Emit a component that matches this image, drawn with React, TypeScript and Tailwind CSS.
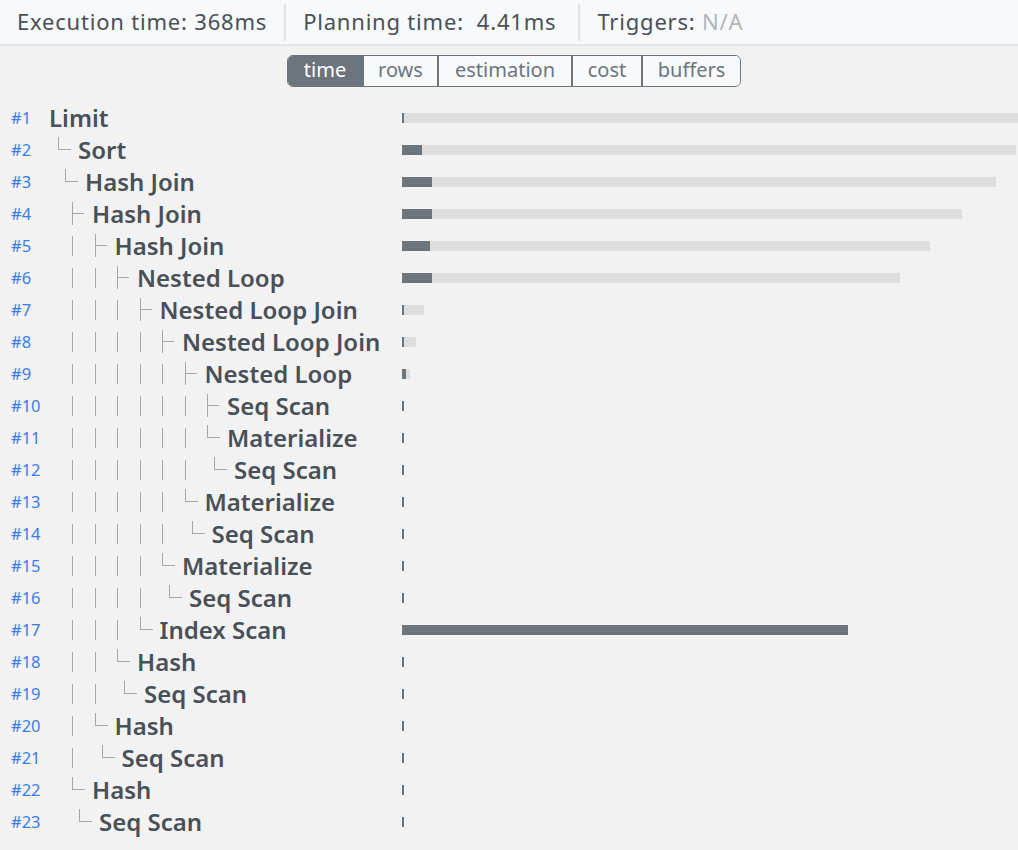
import React from "react";

type Row = { id: number; name: string; prefix: string; dark: number; total: number };

// prefix tokens: "s" = blank gap, "|" = vertical guide, "t" = ├ , "l" = └
const rows: Row[] = [
  { id: 1, name: "Limit", prefix: "", dark: 2, total: 640 },
  { id: 2, name: "Sort", prefix: "l", dark: 20, total: 614 },
  { id: 3, name: "Hash Join", prefix: "sl", dark: 30, total: 594 },
  { id: 4, name: "Hash Join", prefix: "sst", dark: 30, total: 560 },
  { id: 5, name: "Hash Join", prefix: "ss|t", dark: 28, total: 528 },
  { id: 6, name: "Nested Loop", prefix: "ss||t", dark: 30, total: 498 },
  { id: 7, name: "Nested Loop Join", prefix: "ss|||t", dark: 2, total: 22 },
  { id: 8, name: "Nested Loop Join", prefix: "ss||||t", dark: 2, total: 14 },
  { id: 9, name: "Nested Loop", prefix: "ss|||||t", dark: 4, total: 8 },
  { id: 10, name: "Seq Scan", prefix: "ss||||||t", dark: 2, total: 2 },
  { id: 11, name: "Materialize", prefix: "ss||||||l", dark: 2, total: 2 },
  { id: 12, name: "Seq Scan", prefix: "ss||||||sl", dark: 2, total: 2 },
  { id: 13, name: "Materialize", prefix: "ss|||||l", dark: 2, total: 2 },
  { id: 14, name: "Seq Scan", prefix: "ss|||||sl", dark: 2, total: 2 },
  { id: 15, name: "Materialize", prefix: "ss||||l", dark: 2, total: 2 },
  { id: 16, name: "Seq Scan", prefix: "ss||||sl", dark: 2, total: 2 },
  { id: 17, name: "Index Scan", prefix: "ss|||l", dark: 446, total: 446 },
  { id: 18, name: "Hash", prefix: "ss||l", dark: 2, total: 2 },
  { id: 19, name: "Seq Scan", prefix: "ss||sl", dark: 2, total: 2 },
  { id: 20, name: "Hash", prefix: "ss|l", dark: 2, total: 2 },
  { id: 21, name: "Seq Scan", prefix: "ss|sl", dark: 2, total: 2 },
  { id: 22, name: "Hash", prefix: "ssl", dark: 2, total: 2 },
  { id: 23, name: "Seq Scan", prefix: "sssl", dark: 2, total: 2 },
];

const Token: React.FC<{ t: string }> = ({ t }) => {
  if (t === "s") return <span className="w-[7px] shrink-0" />;
  if (t === "|")
    return (
      <span className="w-[22.5px] shrink-0 h-full flex items-center">
        <span className="block w-px h-[20px] bg-[#a3a8ad]" />
      </span>
    );
  if (t === "t")
    return (
      <span className="relative w-[20px] shrink-0 h-full">
        <span className="absolute left-0 top-[4px] w-px h-[23px] bg-[#a3a8ad]" />
        <span className="absolute left-0 top-[15px] w-[12px] h-px bg-[#a3a8ad]" />
      </span>
    );
  return (
    <span className="relative w-[20px] shrink-0 h-full">
      <span className="absolute left-0 top-[3px] w-px h-[13px] bg-[#a3a8ad]" />
      <span className="absolute left-0 top-[15px] w-[13px] h-px bg-[#a3a8ad]" />
    </span>
  );
};

const tabs = [
  { label: "time", w: "w-[74px]" },
  { label: "rows", w: "w-[75px]" },
  { label: "estimation", w: "w-[134px]" },
  { label: "cost", w: "w-[70px]" },
  { label: "buffers", w: "w-[99px]" },
];

export default function App() {
  return (
    <div className="w-[1018px] h-[850px] overflow-hidden bg-[#f2f2f2] text-[#495057] font-['Noto_Sans','Open_Sans',sans-serif]">
      <div className="h-[46px] bg-[#f8f9fa] border-b-2 border-[#e3e6e9] flex items-center text-[22px] tracking-[0.8px]">
        <div className="pl-[17px] pr-[17px] pb-[2px] whitespace-nowrap">Execution time: 368ms</div>
        <div className="w-[2px] h-[37px] bg-[#e1e4e7]" />
        <div className="pl-[17px] pr-[22px] pb-[2px] whitespace-nowrap">
          Planning time:<span className="ml-[13px]">4.41ms</span>
        </div>
        <div className="w-[2px] h-[37px] bg-[#e1e4e7]" />
        <div className="pl-[17px] pb-[2px] whitespace-nowrap">
          Triggers: <span className="text-[#adb5bd]">N/A</span>
        </div>
      </div>

      <div className="flex justify-center pt-[9px] pl-[10px]">
        <div className="flex h-[32px] rounded-[6px] border border-[#6c757d] overflow-hidden">
          {tabs.map((tab, i) => (
            <div
              key={tab.label}
              className={
                tab.w +
                " flex items-center justify-center text-[20px] leading-none pb-[2px] " +
                (i === 0 ? "bg-[#6c757d] text-white" : "bg-[#f8f9fa] text-[#6c757d] border-l-2 border-[#6c757d]")
              }
            >
              {tab.label}
            </div>
          ))}
        </div>
      </div>

      <div className="mt-[15px] flex flex-col">
        {rows.map((r) => (
          <div key={r.id} className="h-[32px] flex items-stretch">
            <div className="w-[49px] shrink-0 pl-[11px] flex items-center text-[16.5px] text-[#3a7de8]">#{r.id}</div>
            <div className="w-[353px] shrink-0 flex items-stretch">
              {r.prefix.length > 0 && <span className="w-[9px] shrink-0" />}
              {r.prefix.split("").map((t, i) => (
                <Token key={i} t={t} />
              ))}
              <span className="flex items-center text-[24px] font-semibold whitespace-nowrap leading-none">{r.name}</span>
            </div>
            <div className="flex items-center">
              <div className="h-[10px] bg-[#dedede] flex" style={{ width: r.total }}>
                <div className="h-full bg-[#6c757d]" style={{ width: r.dark }} />
              </div>
            </div>
          </div>
        ))}
      </div>
    </div>
  );
}
